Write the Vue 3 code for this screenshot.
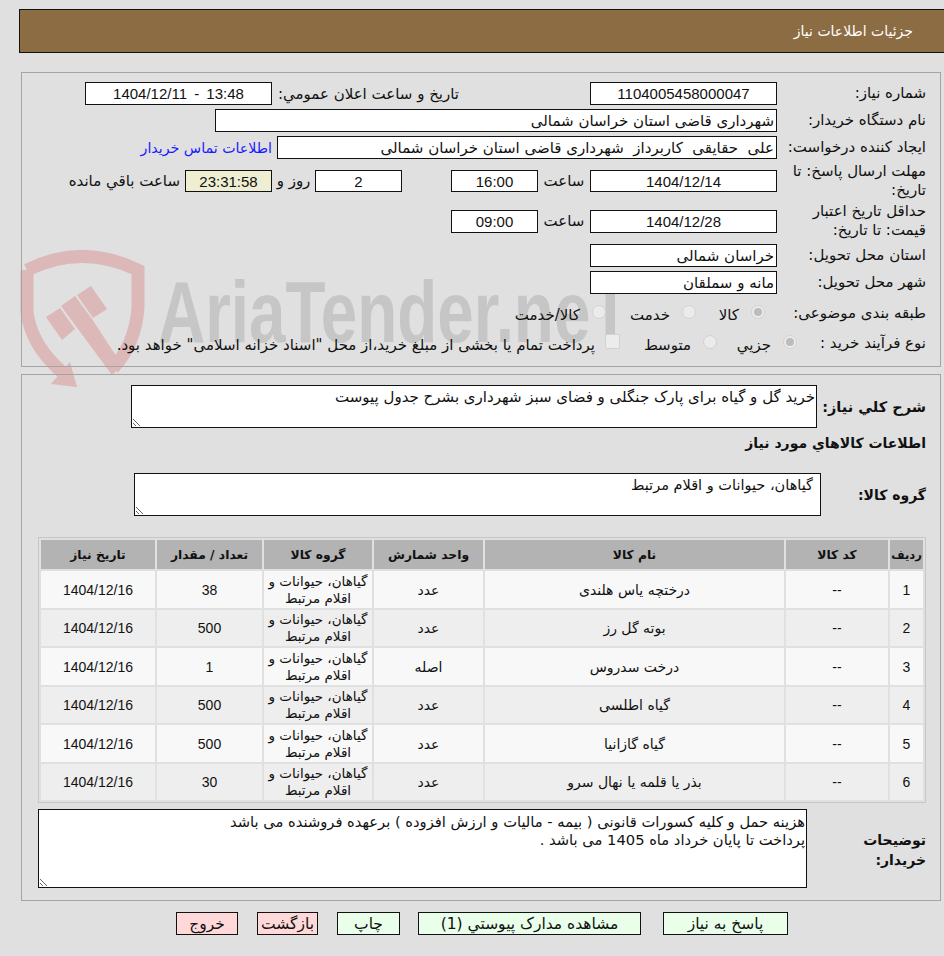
<script setup>
import { ref } from 'vue';

const description = ref('خرید گل و گیاه برای پارک جنگلی و فضای سبز شهرداری بشرح جدول پیوست');
const goodsGroup = ref('گیاهان، حیوانات و اقلام مرتبط');
const buyerNotes = ref('هزینه حمل و کلیه کسورات قانونی ( بیمه - مالیات و ارزش افزوده ) برعهده فروشنده می باشد\nپرداخت تا پایان خرداد ماه 1405 می باشد .');

const groupName = 'گیاهان، حیوانات و اقلام مرتبط';
const items = [
  { id: 1, name: 'درختچه یاس هلندی', unit: 'عدد', qty: 38 },
  { id: 2, name: 'بوته گل رز', unit: 'عدد', qty: 500 },
  { id: 3, name: 'درخت سدروس', unit: 'اصله', qty: 1 },
  { id: 4, name: 'گیاه اطلسی', unit: 'عدد', qty: 500 },
  { id: 5, name: 'گیاه گازانیا', unit: 'عدد', qty: 500 },
  { id: 6, name: 'بذر یا قلمه یا نهال سرو', unit: 'عدد', qty: 30 }
];
</script>

<template>
  <div class="page" dir="rtl">
    <div class="title-bar">جزئیات اطلاعات نیاز</div>

    <!-- watermark sits behind the panels -->
    <div class="watermark" aria-hidden="true">
      <svg class="wm-shield" width="130" height="140" viewBox="0 0 130 140">
        <path d="M7 20 Q62 -7 118 20 L118 58 Q115 95 93 118" fill="none" stroke="#dcb8b8" stroke-width="13" />
        <path d="M7 20 L7 62 Q11 95 42 122" fill="none" stroke="#dcb8b8" stroke-width="13" />
        <polygon points="50,112 57,137 31,134" fill="#dcb8b8" />
        <polygon points="26,67 40,58 55,79 42,90" fill="#dcb8b8" />
        <polygon points="41,56 55,46 72,69 102,115 92,125 58,79" fill="#dcb8b8" />
        <polygon points="57,45 71,36 87,59 73,68" fill="#dcb8b8" />
      </svg>
      <span class="wm-text">AriaTender.neT</span>
    </div>

    <section class="panel panel-top">
      <div class="row">
        <label class="lbl">شماره نیاز:</label>
        <div class="field w187 num">1104005458000047</div>
        <label class="announce-lbl">تاریخ و ساعت اعلان عمومي:</label>
        <div class="field w187 num announce-val" dir="ltr">1404/12/11 - 13:48</div>
      </div>
      <div class="row mt4">
        <label class="lbl">نام دستگاه خریدار:</label>
        <div class="field w562 start">شهرداری قاضی استان خراسان شمالی</div>
      </div>
      <div class="row mt4">
        <label class="lbl">ایجاد کننده درخواست:</label>
        <div class="field w500 start">علی&nbsp; حقایقی&nbsp; کاربرداز&nbsp; شهرداری قاضی استان خراسان شمالی</div>
        <a class="contact" href="#">اطلاعات تماس خریدار</a>
      </div>
      <div class="row tall mt5">
        <label class="lbl">مهلت ارسال پاسخ: تا تاریخ:</label>
        <div class="field w187 h22 num">1404/12/14</div>
        <span class="unit">ساعت</span>
        <div class="field w87 h22 num">16:00</div>
        <div class="spacer"></div>
        <div class="field w87 h22 num">2</div>
        <span class="days">روز و</span>
        <div class="field w87 h22 num timer">23:31:58</div>
        <span class="remain">ساعت باقي مانده</span>
      </div>
      <div class="row tall mt6">
        <label class="lbl">حداقل تاریخ اعتبار قیمت: تا تاریخ:</label>
        <div class="field w187 num">1404/12/28</div>
        <span class="unit">ساعت</span>
        <div class="field w87 num">09:00</div>
      </div>
      <div class="row mt6">
        <label class="lbl">استان محل تحویل:</label>
        <div class="field w187 start">خراسان شمالی</div>
      </div>
      <div class="row mt4">
        <label class="lbl">شهر محل تحویل:</label>
        <div class="field w187 start">مانه و سملقان</div>
      </div>
      <div class="row short mt8">
        <label class="lbl">طبقه بندی موضوعی:</label>
        <div class="opt-box s1"><span class="radio checked"></span><span class="opt">کالا</span></div>
        <div class="opt-box s2"><span class="radio"></span><span class="opt">خدمت</span></div>
        <div class="opt-box"><span class="radio"></span><span class="opt">کالا/خدمت</span></div>
      </div>
      <div class="row short mt8">
        <label class="lbl type-lbl">نوع فرآیند خرید :</label>
        <div class="opt-box p1"><span class="radio checked"></span><span class="opt">جزیي</span></div>
        <div class="opt-box p2"><span class="radio"></span><span class="opt">متوسط</span></div>
        <div class="opt-box"><span class="check"></span><span class="opt">پرداخت تمام یا بخشی از مبلغ خرید،از محل "اسناد خزانه اسلامی" خواهد بود.</span></div>
      </div>
    </section>

    <section class="panel panel-bottom">
      <div class="row block-row">
        <label class="lbl-bold desc-lbl">شرح کلي نیاز:</label>
        <textarea class="area desc-area" readonly :value="description"></textarea>
      </div>
      <h3 class="goods-title">اطلاعات کالاهاي مورد نیاز</h3>
      <div class="row block-row group-row">
        <label class="lbl-bold group-lbl">گروه کالا:</label>
        <textarea class="area group-area" readonly :value="goodsGroup"></textarea>
      </div>

      <table class="goods">
        <colgroup>
          <col class="c-row" /><col class="c-code" /><col class="c-name" /><col class="c-unit" />
          <col class="c-group" /><col class="c-qty" /><col class="c-date" />
        </colgroup>
        <thead>
          <tr>
            <th class="th-row">ردیف</th><th>کد کالا</th><th>نام کالا</th><th>واحد شمارش</th>
            <th>گروه کالا</th><th>تعداد / مقدار</th><th>تاریخ نیاز</th>
          </tr>
        </thead>
        <tbody>
          <tr v-for="item in items" :key="item.id">
            <td class="num">{{ item.id }}</td>
            <td class="num">--</td>
            <td>{{ item.name }}</td>
            <td>{{ item.unit }}</td>
            <td class="group-cell">{{ groupName }}</td>
            <td class="num">{{ item.qty }}</td>
            <td class="num">1404/12/16</td>
          </tr>
        </tbody>
      </table>

      <div class="row block-row notes-row">
        <label class="lbl-bold notes-lbl"><span>توضیحات خریدار:</span></label>
        <textarea class="area notes-area" readonly :value="buyerNotes"></textarea>
      </div>
    </section>

    <div class="actions">
      <button class="btn ok b-reply">پاسخ به نیاز</button>
      <button class="btn ok b-docs">مشاهده مدارک پیوستي (1)</button>
      <button class="btn ok b-print">چاپ</button>
      <button class="btn bad b-back">بازگشت</button>
      <button class="btn bad b-exit">خروج</button>
    </div>
  </div>
</template>

<style scoped>
.page {
  position: relative;
  padding-top: 9px;
  height: 947px;
  font-family: "DejaVu Sans", sans-serif;
  font-size: 15px;
  color: #111;
  background: #e0e0e0;
}

.title-bar {
  margin-left: 19px;
  height: 44px;
  box-sizing: border-box;
  border: 1px solid #111;
  border-right: 0;
  background: #8c6c42;
  color: #fff;
  font-size: 14px;
  line-height: 43px;
  padding-right: 31px;
}

.watermark {
  position: absolute;
  left: 20px;
  top: 250px;
  width: 620px;
  height: 140px;
  z-index: 0;
  pointer-events: none;
}
.wm-shield { position: absolute; left: 0; top: 0; }
.wm-text {
  position: absolute;
  left: 138px;
  top: 12px;
  font-family: "Liberation Sans", sans-serif;
  font-weight: 700;
  font-size: 88px;
  line-height: 100px;
  color: #c6c6c6;
  transform: scaleX(0.745);
  transform-origin: left top;
  white-space: nowrap;
  direction: ltr;
}

.panel {
  position: relative;
  z-index: 1;
  margin-left: 21px;
  margin-right: 3px;
  box-sizing: border-box;
  border: 1px solid #a4a4a4;
  padding-right: 14px;
}
.panel-top { margin-top: 19px; height: 295px; padding-top: 9px; }
.panel-bottom { margin-top: 7px; height: 527px; padding-top: 10px; }

.row { display: flex; align-items: center; height: 23px; }
.tall { height: 34px; }
.short { height: 22px; }
.mt4 { margin-top: 4px; }
.mt5 { margin-top: 5px; }
.mt6 { margin-top: 6px; }
.mt8 { margin-top: 8px; }

.lbl {
  width: 149px;
  flex: none;
  box-sizing: border-box;
  padding-left: 10px;
  line-height: 19px;
  white-space: normal;
}
.type-lbl { width: 129px; white-space: nowrap; padding-left: 0; }

.field {
  flex: none;
  box-sizing: border-box;
  height: 23px;
  line-height: 22px;
  border: 1px solid #111;
  background: #fff;
  text-align: center;
  white-space: nowrap;
  overflow: hidden;
}
.h22 { height: 22px; }
.start { text-align: right; padding-right: 2px; }
.w187 { width: 187px; }
.w87 { width: 87px; }
.w562 { width: 562px; }
.w500 { width: 500px; }

.num { font-family: "Liberation Sans", sans-serif; font-size: 15px; }

.announce-lbl { margin-right: 131px; width: 182px; flex: none; white-space: nowrap; }
.announce-val { margin-right: 5px; word-spacing: 3px; }
.contact { margin-right: 5px; color: #1a1aff; font-size: 14.2px; text-decoration: none; white-space: nowrap; }
.unit { width: 52px; flex: none; text-align: center; }
.spacer { width: 49px; flex: none; }
.days { width: 43px; flex: none; text-align: center; }
.timer { background: #eeeed2; }
.remain { margin-right: 5px; white-space: nowrap; }

.opt-box { flex: none; display: flex; align-items: center; white-space: nowrap; }
.s1 { width: 81px; padding-right: 12px; box-sizing: border-box; }
.s2 { width: 90px; }
.p1 { width: 80px; }
.p2 { width: 97px; }

.radio {
  flex: none;
  position: relative;
  width: 14px;
  height: 14px;
  box-sizing: border-box;
  border: 1px solid #d2d2d2;
  border-radius: 50%;
  background: #ebebeb;
  margin-bottom: 3px;
  margin-left: 12px;
}
.radio.checked::after {
  content: "";
  position: absolute;
  left: 2px;
  top: 2px;
  width: 8px;
  height: 8px;
  border-radius: 50%;
  background: #bcbcbc;
}
.check {
  flex: none;
  width: 15px;
  height: 15px;
  box-sizing: border-box;
  border: 1px solid #d2d2d2;
  border-radius: 2px;
  background: #ececec;
  margin-bottom: 3px;
  margin-left: 10px;
}
.opt { padding-top: 3px; }

.block-row { height: auto; }
.lbl-bold { flex: none; font-weight: 700; font-size: 14px; line-height: 20px; }
.desc-lbl { width: 109px; font-size: 14.5px; }
.group-lbl { width: 105px; }
.notes-lbl { width: 119px; }
.notes-lbl span { display: block; width: 70px; padding-top: 2px; }

.area {
  display: block;
  flex: none;
  box-sizing: border-box;
  border: 1px solid #111;
  border-radius: 0;
  background: #fff;
  padding: 2px 1px;
  margin: 0;
  font: inherit;
  line-height: 18px;
  color: #111;
  outline: none;
  overflow: hidden;
}
.desc-area { width: 686px; height: 43px; }
.group-row { margin-top: 20px; }
.group-area { width: 687px; height: 43px; padding-right: 7px; font-size: 14.5px; }
.notes-row { margin-top: 6px; }
.notes-area { width: 769px; height: 79px; padding-top: 3px; font-size: 14.7px; }

.goods-title {
  margin: 5px 0 0;
  height: 20px;
  font-size: 14px;
  font-weight: 700;
  line-height: 20px;
}

.goods {
  margin-top: 21px;
  width: 886px;
  table-layout: fixed;
  border-collapse: separate;
  border-spacing: 2px;
  border: 1px solid #c6c6c6;
}
.c-row { width: 33px; }
.c-code { width: 102px; }
.c-name { width: 299px; }
.c-unit { width: 109px; }
.c-group { width: 108px; }
.c-qty { width: 105px; }
.c-date { width: 114px; }

.goods th {
  height: 29px;
  padding: 0;
  background: #b3b3b3;
  font-size: 12.3px;
  font-weight: 700;
  white-space: nowrap;
}
.goods th.th-row { font-size: 11.5px; }
.goods td {
  height: 35.5px;
  padding: 1px 0 0;
  background: #f8f8f8;
  text-align: center;
  font-size: 14px;
}
.goods td.num { font-size: 14px; }
.goods td.group-cell { font-size: 13.5px; line-height: 17px; }
.goods tbody tr:nth-child(even) td { background: #eeeeee; }

.actions {
  position: relative;
  z-index: 1;
  display: flex;
  justify-content: flex-start;
  margin-top: 11px;
  padding-right: 156px;
}
.btn {
  flex: none;
  box-sizing: border-box;
  height: 23px;
  border: 1px solid #111;
  padding: 0;
  font-family: inherit;
  font-size: 15.5px;
  color: #111;
  cursor: pointer;
  white-space: nowrap;
}
.ok { background: #e9ffe9; }
.bad { background: #ffd9d9; }
.b-reply { width: 125px; }
.b-docs { width: 223px; margin-right: 22px; }
.b-print { width: 63px; margin-right: 18px; }
.b-back { width: 61px; margin-right: 19px; }
.b-exit { width: 62px; margin-right: 19px; }
</style>

<style>
html, body { margin: 0; background: #e0e0e0; }
</style>
